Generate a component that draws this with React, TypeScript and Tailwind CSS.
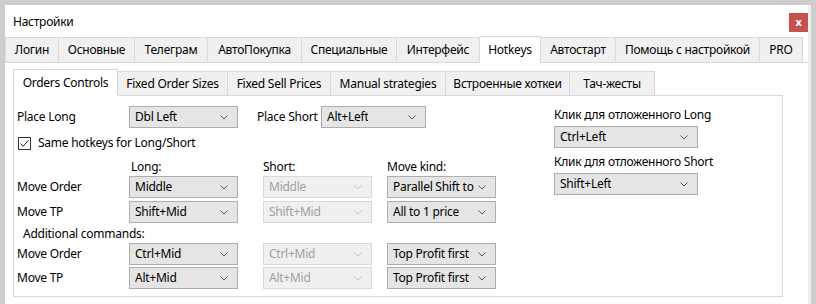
import { clsx } from "clsx";

const outerTabs = [
  { label: "Логин", w: "w-[54px]" },
  { label: "Основные", w: "w-[76px]" },
  { label: "Телеграм", w: "w-[73px]" },
  { label: "АвтоПокупка", w: "w-[94px]" },
  { label: "Специальные", w: "w-[95px]" },
  { label: "Интерфейс", w: "w-[83px]" },
  { label: "Hotkeys", w: "w-[61px]", active: true },
  { label: "Автостарт", w: "w-[75px]" },
  { label: "Помощь с настройкой", w: "w-[144px]" },
  { label: "PRO", w: "w-[43px]" },
];

const innerTabs = [
  { label: "Orders Controls", w: "w-[105px]", active: true },
  { label: "Fixed Order Sizes", w: "w-[110px]" },
  { label: "Fixed Sell Prices", w: "w-[103px]" },
  { label: "Manual strategies", w: "w-[115px]" },
  { label: "Встроенные хоткеи", w: "w-[124px]" },
  { label: "Тач-жесты", w: "w-[85px]" },
];

function Chevron({ disabled }: { disabled?: boolean }) {
  return (
    <svg width="8" height="5" viewBox="0 0 8 5" className="shrink-0">
      <polyline
        points="0.5,0.5 4,4 7.5,0.5"
        fill="none"
        stroke={disabled ? "#c4c4c4" : "#5a5a5a"}
        strokeWidth="1"
      />
    </svg>
  );
}

function Combo({ value, className, disabled }: { value: string; className?: string; disabled?: boolean }) {
  return (
    <div
      className={clsx(
        "flex h-[22px] shrink-0 items-center justify-between border pl-[5px] pr-[9px]",
        disabled ? "border-[#d9d9d9] bg-[#f0f0f0] text-[#a0a0a0]" : "border-[#adadad] bg-[#e5e5e5] text-black",
        className
      )}
    >
      <span className="truncate">{value}</span>
      <Chevron disabled={disabled} />
    </div>
  );
}

function Row({ label, long, short, kind, className }: { label: string; long: string; short: string; kind: string; className?: string }) {
  return (
    <div className={clsx("flex items-center", className)}>
      <span className="w-[112px] shrink-0">{label}</span>
      <Combo value={long} className="w-[109px]" />
      <Combo value={short} className="ml-[25px] w-[109px]" disabled />
      <Combo value={kind} className="ml-[15px] w-[109px]" />
    </div>
  );
}

export default function App() {
  return (
    <div className="h-[304px] w-[816px] overflow-hidden bg-[#cdcdcd] pl-[5px] pt-[5px] font-['Noto_Sans','Open_Sans',sans-serif] text-[12px] leading-[16px] tracking-[-0.25px] text-black">
      <div className="flex h-[299px] w-[806px] flex-col border-r-[3px] border-[#eeeeee] bg-white">
        {/* title bar */}
        <div className="flex h-[32px] shrink-0 justify-between">
          <span className="pl-[8px] pt-[9px]">Настройки</span>
          <div className="mt-[8px] flex h-[19px] w-[19px] items-center justify-center bg-[#c75050] pb-[2px] text-[11px] font-bold text-white">
            x
          </div>
        </div>

        {/* outer tabs */}
        <div className="relative z-10 flex h-[25px] shrink-0">
          {outerTabs.map((t) => (
            <div
              key={t.label}
              className={clsx(
                "flex shrink-0 items-center justify-center border border-l-0 first:border-l",
                t.w,
                t.active
                  ? "-mt-px h-[27px] border-[#d0dae3] border-b-white bg-white"
                  : "h-[26px] border-[#d9d9d9] bg-[#f0f0f0]"
              )}
            >
              {t.label}
            </div>
          ))}
        </div>

        {/* content */}
        <div className="flex-1 border-t border-[#d9d9d9] pl-[8px] pt-[7px]">
          <div className="relative z-10 flex h-[26px] items-end">
            {innerTabs.map((t) => (
              <div
                key={t.label}
                className={clsx(
                  "flex shrink-0 items-center justify-center border border-l-0 first:border-l",
                  t.w,
                  t.active
                    ? "h-[27px] border-[#d0dae3] border-b-white bg-white"
                    : "h-[25px] border-[#d9d9d9] bg-[#f0f0f0]"
                )}
              >
                {t.label}
              </div>
            ))}
          </div>

          <div className="-mt-px flex h-[202px] w-[770px] border border-[#d9d9d9]">
            {/* left block */}
            <div className="w-[540px] shrink-0 pl-[3px] pt-[10px]">
              <div className="flex items-center">
                <span className="w-[112px] shrink-0">Place Long</span>
                <Combo value="Dbl Left" className="w-[109px]" />
                <span className="ml-[19px] w-[64px] shrink-0">Place Short</span>
                <Combo value="Alt+Left" className="w-[105px]" />
              </div>

              <div className="mt-[7px] flex h-[16px] items-center pl-[1px]">
                <div className="flex h-[13px] w-[13px] items-center justify-center border border-[#333333] bg-white">
                  <svg width="11" height="11" viewBox="0 0 11 11">
                    <polyline points="1.5,5.5 4.2,8.3 9.5,2.2" fill="none" stroke="#222" strokeWidth="1" />
                  </svg>
                </div>
                <span className="ml-[7px]">Same hotkeys for Long/Short</span>
              </div>

              <div className="mt-[8px] flex h-[16px] items-center">
                <span className="ml-[114px] w-[132px] shrink-0">Long:</span>
                <span className="w-[124px] shrink-0">Short:</span>
                <span>Move kind:</span>
              </div>

              <Row label="Move Order" long="Middle" short="Middle" kind="Parallel Shift to" className="mt-[1px]" />
              <Row label="Move TP" long="Shift+Mid" short="Shift+Mid" kind="All to 1 price" className="mt-[3px]" />

              <div className="mt-[3px] h-[16px] pl-[6px]">Additional commands:</div>

              <Row label="Move Order" long="Ctrl+Mid" short="Ctrl+Mid" kind="Top Profit first" className="mt-[1px]" />
              <Row label="Move TP" long="Alt+Mid" short="Alt+Mid" kind="Top Profit first" className="mt-[2px]" />
            </div>

            {/* right block */}
            <div className="pt-[11px]">
              <div className="h-[16px]">Клик для отложенного Long</div>
              <Combo value="Ctrl+Left" className="mt-[3px] h-[21px] w-[144px]" />
              <div className="mt-[6px] h-[16px]">Клик для отложенного Short</div>
              <Combo value="Shift+Left" className="mt-[3px] h-[21px] w-[144px]" />
            </div>
          </div>
        </div>
      </div>
    </div>
  );
}
